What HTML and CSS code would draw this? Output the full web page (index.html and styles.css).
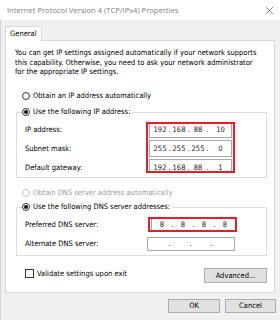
FILE: index.html
```html
<!DOCTYPE html>
<html lang="en">
<head>
	<meta charset="UTF-8">
	<title>Internet Protocol Version 4 (TCP/IPv4) Properties</title>
<link rel="stylesheet" href="styles.css">
</head>
<body>
	<div class='dlg'>
		<div class='titlebar'>
			<span class='title'>Internet Protocol Version 4 (TCP/IPv4) Properties</span>
			<svg class='close' width='7' height='7' viewBox='0 0 7 7'><path d='M0.3 0.3L6.7 6.7M6.7 0.3L0.3 6.7' stroke='#555' stroke-width='0.8' fill='none'/></svg>
		</div>
		<div class='client'>
			<div class='tabs'><div class='tab'>General</div></div>
			<div class='panel'>
				<p class='intro'>You can get IP settings assigned automatically if your network supports<br>this capability. Otherwise, you need to ask your network administrator<br>for the appropriate IP settings.</p>

				<div class='opt first'><span class='radio'></span>Obtain an IP address automatically</div>
				<fieldset class='group'>
					<legend class='opt'><span class='radio on'></span>Use the following IP address:</legend>
					<div class='rows'>
						<div class='labels'>
							<div>IP address:</div>
							<div>Subnet mask:</div>
							<div>Default gateway:</div>
						</div>
						<div class='hl hl-ip'>
							<div class='ip'><span class='seg'>192</span><span class='dot'>.</span><span class='seg'>168</span><span class='dot'>.</span><span class='seg'>88</span><span class='dot'>.</span><span class='seg last'>10</span></div>
							<div class='ip'><span class='seg'>255</span><span class='dot'>.</span><span class='seg'>255</span><span class='dot'>.</span><span class='seg'>255</span><span class='dot'>.</span><span class='seg last'>0</span></div>
							<div class='ip'><span class='seg'>192</span><span class='dot'>.</span><span class='seg'>168</span><span class='dot'>.</span><span class='seg'>88</span><span class='dot'>.</span><span class='seg last'>1</span></div>
						</div>
					</div>
				</fieldset>

				<div class='opt off'><span class='radio'></span>Obtain DNS server address automatically</div>
				<fieldset class='group dns'>
					<legend class='opt'><span class='radio on'></span>Use the following DNS server addresses:</legend>
					<div class='rows'>
						<div class='labels'>
							<div>Preferred DNS server:</div>
							<div>Alternate DNS server:</div>
						</div>
						<div class='dnsCol'>
							<div class='hl hl-dns'>
								<div class='ip wide'><span class='seg'>8</span><span class='dot'>.</span><span class='seg'>8</span><span class='dot'>.</span><span class='seg'>8</span><span class='dot'>.</span><span class='seg'>8</span></div>
							</div>
							<div class='ip wide alt'><span class='seg'></span><span class='dot'>.</span><span class='seg'></span><span class='dot'>.</span><span class='seg'></span><span class='dot'>.</span><span class='seg'></span></div>
						</div>
					</div>
				</fieldset>

				<div class='bottom'>
					<div class='check'><span class='box'></span>Validate settings upon exit</div>
					<div class='btn adv'>Advanced...</div>
				</div>
			</div>
			<div class='footer'>
				<div class='btn ok'>OK</div>
				<div class='btn cancel'>Cancel</div>
			</div>
		</div>
	</div>
</body>
</html>
```

FILE: styles.css
```css
*{
	box-sizing: border-box;
}
body{
	margin:0;
	background:#f0f0f0;
	color:#000;
	font-family:"DejaVu Sans Condensed","DejaVu Sans",sans-serif;
	font-size:7.5px;
}
.dlg{
	width:280px;height:320px;
	display:flex;
	flex-direction:column;
}

/* title bar */
.titlebar{
	height:20px;
	flex:none;
	background:#fff;
	display:flex;
	align-items:center;
	justify-content:space-between;
	padding:0 7px;
	font-family:"Open Sans",sans-serif;
	font-size:7.6px;
	color:#808080;
}
.close{
	display:block;
}

.client{
	flex:1;
	border-left:1px solid #d4d4d4;
	padding:6px 0 0 4px;
}

/* tab */
.tabs{
	display:flex;
}
.tab{
	position:relative;
	z-index:1;
	height:15px;
	margin-bottom:-1px;
	padding:0 4px;
	line-height:13px;
	background:#fff;
	border:1px solid #d9d9d9;
	border-bottom:none;
	width:37px;
}
.panel{
	width:270px;
	background:#fff;
	border:1px solid #d9d9d9;
	padding:7px 7px 9px 10px;
}
.intro{
	margin:0 0 0 -1px;
	line-height:9.5px;
}

/* radio options */
.opt{
	display:flex;
	align-items:center;
	height:12px;
	line-height:12px;
	white-space:nowrap;
}
.opt.first{
	margin-top:13.5px;
	padding-left:6px;
}
.opt.off{
	margin-top:9px;
	padding-left:6px;
	color:#a0a0a0;
}
.radio{
	display:inline-block;
	width:8px;height:8px;
	margin-right:3px;
	border:1px solid #333;
	border-radius:50%;
	background:#fff;
	position:relative;
}
.radio.on:after{
	content:'';
	position:absolute;
	left:1px;top:1px;
	width:4px;height:4px;
	border-radius:50%;
	background:#111;
}
.opt.off .radio{
	border-color:#c4c4c4;
}

/* group boxes */
.group{
	margin:4px 0 0;
	padding:0;
	min-width:0;
	border:1px solid #dcdcdc;
}
.group.dns{
	margin-top:2px;
}
.group legend{
	margin-left:5px;
	padding:0 2px 0 0;
}
.rows{
	display:flex;
	align-items:flex-start;
}
.labels{
	width:129px;
	flex:none;
	padding:2px 0 0 8px;
	line-height:19px;
}
.dns .labels{
	padding:1.5px 0 2.5px 8px;
}

/* highlighted (red) boxes */
.hl{
	border:2px solid #ec1c24;
	overflow:hidden;
	padding:0 1px;
}
.hl-ip{
	margin-top:4px;
	width:89px;height:51px;
}
.hl-dns{
	margin-top:4px;
	margin-left:2px;
	width:89px;height:15px;
}

/* ip address fields */
.ip{
	display:flex;
	width:83px;height:17px;
	margin-bottom:2px;
	padding-left:3px;
	border:1px solid #a8a8a8;
	background:#fff;
	line-height:15px;
	color:#222;
}
.hl-ip .ip:first-child{
	margin-top:-3px;
}
.seg{
	width:14px;
	text-align:center;
}
.seg.last{
	flex:1;
}
.dot{
	width:5px;
	text-align:center;
}
.ip.wide{
	width:85px;height:14px;
	line-height:12px;
	margin:-1px 0 0;
	padding-left:2px;
}
.ip.wide .seg{
	width:16px;
}
.ip.wide .dot{
	width:5px;
}
.ip.wide.alt{
	margin:5px 0 0 1px;
	width:88px;
	padding-left:3px;
}

/* bottom row */
.bottom{
	display:flex;
	justify-content:space-between;
	align-items:flex-start;
	margin-top:12px;
}
.check{
	display:flex;
	align-items:center;
	height:10px;
	padding-left:9px;
	margin-top:0.5px;
}
.box{
	display:inline-block;
	width:9px;height:9px;
	margin-right:3px;
	border:1px solid #333;
	background:#fff;
}
.btn{
	height:15px;
	line-height:13px;
	text-align:center;
	background:#e1e1e1;
	border:1px solid #adadad;
}
.adv{
	width:63px;
}
.footer{
	display:flex;
	justify-content:flex-end;
	gap:5px;
	margin-top:6px;
	padding-right:4px;
}
.ok{
	width:52px;height:14px;line-height:12px;
}
.cancel{
	width:51px;height:14px;line-height:12px;
}
```
